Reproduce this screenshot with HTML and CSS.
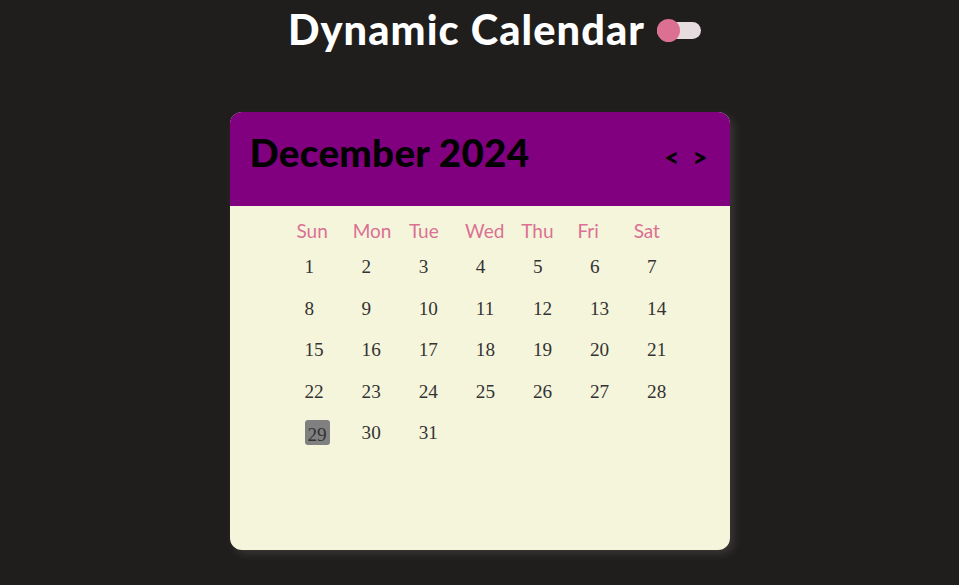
FILE: index.html
```html
<!DOCTYPE html>
<html lang="en">
<head>
<meta charset="utf-8">
<title>Dynamic Calendar</title>
<link rel="stylesheet" href="styles.css">
</head>
<body>
<header class="top">
  <h1 class="title">Dynamic Calendar</h1>
  <span class="toggle"><span class="knob"></span></span>
</header>
<main class="wrap">
  <section class="calendar">
    <div class="cal-head">
      <h2 class="month">December 2024</h2>
      <div class="nav"><span class="arrow">&lt;</span><span class="arrow">&gt;</span></div>
    </div>
    <div class="cal-body">
      <ul class="weekdays">
        <li>Sun</li><li>Mon</li><li>Tue</li><li>Wed</li><li>Thu</li><li>Fri</li><li>Sat</li>
      </ul>
      <ul class="dates">
        <li><span>1</span></li><li><span>2</span></li><li><span>3</span></li><li><span>4</span></li><li><span>5</span></li><li><span>6</span></li><li><span>7</span></li>
        <li><span>8</span></li><li><span>9</span></li><li><span>10</span></li><li><span>11</span></li><li><span>12</span></li><li><span>13</span></li><li><span>14</span></li>
        <li><span>15</span></li><li><span>16</span></li><li><span>17</span></li><li><span>18</span></li><li><span>19</span></li><li><span>20</span></li><li><span>21</span></li>
        <li><span>22</span></li><li><span>23</span></li><li><span>24</span></li><li><span>25</span></li><li><span>26</span></li><li><span>27</span></li><li><span>28</span></li>
        <li><span class="today">29</span></li><li><span>30</span></li><li><span>31</span></li>
      </ul>
    </div>
  </section>
</main>
</body>
</html>
```

FILE: styles.css
```css
html, body {
  margin: 0;
  padding: 0;
}
body {
  background: #1f1e1d;
  width: 959px;
  height: 585px;
  overflow: hidden;
  font-family: "Lato", "Open Sans", sans-serif;
}
.top {
  display: flex;
  align-items: center;
  justify-content: center;
  gap: 12px;
  padding-left: 30px;
  height: 58px;
}
.title {
  margin: 0;
  color: #ffffff;
  font-family: "Lato", sans-serif;
  font-weight: 900;
  font-size: 41.5px;
  letter-spacing: 1.1px;
  line-height: 56px;
}
.toggle {
  position: relative;
  display: block;
  width: 44px;
  height: 17px;
  border-radius: 9px;
  background: #e6dcdf;
  margin-top: 2px;
}
.knob {
  position: absolute;
  left: 0;
  top: -3px;
  width: 23px;
  height: 23px;
  border-radius: 50%;
  background: #db7093;
}
.wrap {
  display: flex;
  justify-content: center;
  padding-top: 54px;
}
.calendar {
  width: 500px;
  height: 438px;
  border-radius: 12px;
  overflow: hidden;
  background: #f5f5dc;
  box-shadow: 4px 4px 10px rgba(255, 235, 235, 0.12);
}
.cal-head {
  height: 94px;
  background: #800080;
  display: flex;
  align-items: center;
  justify-content: space-between;
  padding: 0 22px 0 20px;
}
.month {
  margin: 0;
  color: #000;
  font-family: "Lato", sans-serif;
  font-weight: 900;
  font-size: 38.5px;
  letter-spacing: 0.3px;
  line-height: 40px;
  margin-top: -14px;
}
.nav {
  display: flex;
  gap: 13px;
  margin-top: -4px;
}
.arrow {
  color: #000;
  font-family: "Lato", sans-serif;
  font-weight: 900;
  font-size: 26px;
  line-height: 24px;
}
.cal-body {
  padding: 12px 0 0 67px;
}
ul {
  list-style: none;
  margin: 0;
  padding: 0;
}
.weekdays {
  display: grid;
  grid-template-columns: repeat(7, 56.2px);
  height: 24px;
}
.weekdays li {
  color: #db7093;
  font-family: "Lato", sans-serif;
  font-size: 19px;
  line-height: 26px;
}
.dates {
  display: grid;
  grid-template-columns: repeat(7, 57.1px);
  grid-auto-rows: 41.6px;
  margin-top: 12px;
  margin-left: 8px;
}
.dates li span {
  display: inline-block;
  color: #333;
  font-family: "Liberation Serif", "Times New Roman", serif;
  font-size: 19.2px;
  line-height: 25px;
}
.dates li span.today {
  width: 22px;
  height: 21px;
  line-height: 22px;
  padding: 4px 0 0 3px;
  background: #808080;
  border-radius: 3px;
  box-sizing: content-box;
}
```
